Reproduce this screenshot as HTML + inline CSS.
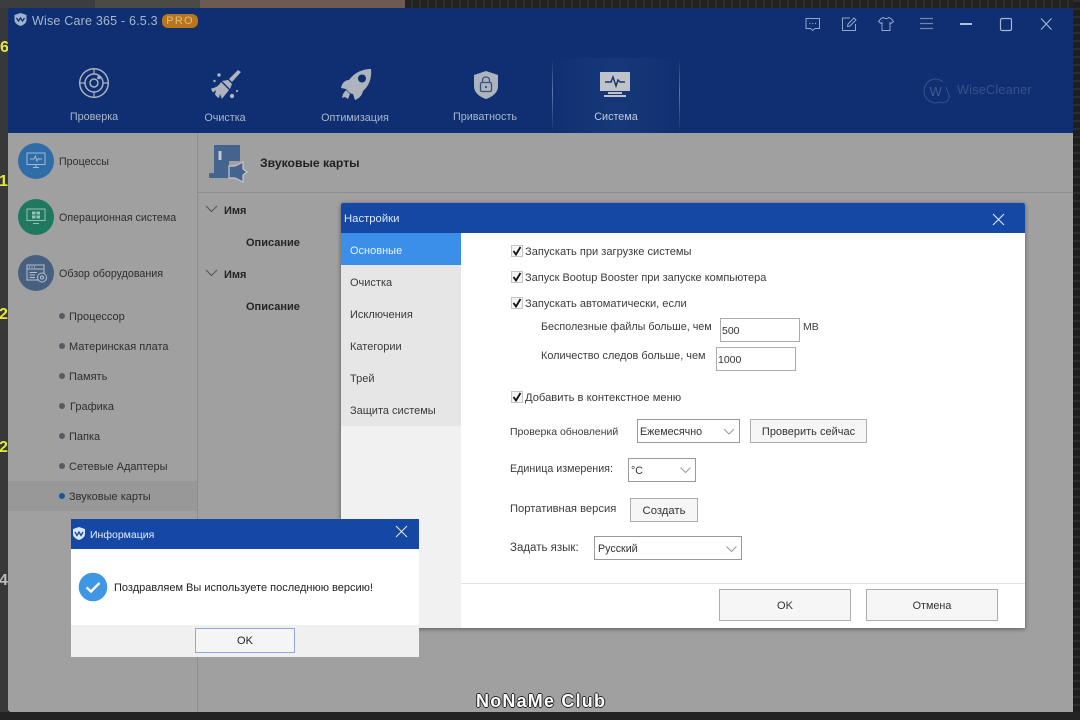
<!DOCTYPE html>
<html lang="ru"><head><meta charset="utf-8"><title>Wise Care 365</title>
<style>
*{box-sizing:border-box}
html,body{margin:0;padding:0;width:1080px;height:720px;overflow:hidden;background:#232323}
body{position:relative;font-family:"Liberation Sans",sans-serif;font-size:11px;color:#2b2b2b}
.a{position:absolute}
.t{position:absolute;white-space:nowrap;line-height:20px}
.b{font-weight:bold}
.nav{color:#aab7cc;font-size:10.8px;transform:translateX(-50%)}
.side{color:#2e2e2e;font-size:10.7px;line-height:22px}
.sub{color:#2e2e2e;font-size:11px;line-height:22px}
.dot{position:absolute;left:59px;width:6px;height:6px;border-radius:50%;background:#565a5e}
.circ{position:absolute;left:18px;width:36px;height:36px;border-radius:50%}
.cb{position:absolute;left:511px;width:12px;height:12px;background:#f4f4f4;border:1px solid #c4c4c4}
.in{position:absolute;border:1px solid #ababab;background:#fff;line-height:25px;padding-left:1px;color:#333;font-size:10.5px}
.btn{position:absolute;border:1px solid #adadad;background:#f6f6f6;text-align:center;color:#333;font-size:11px}
.sel{position:absolute;border:1px solid #9a9a9a;background:#fff;height:24px;line-height:24px;padding-left:2px;color:#333;font-size:10.7px}
.nv{position:absolute;left:350px;color:#3a3a3a;font-size:11px;line-height:22px}
.o{position:absolute;color:#3c3c3c;font-size:11px;line-height:22px;white-space:nowrap}
</style></head><body>

<!-- backdrop -->
<div class="a" style="left:0;top:0;width:8px;height:720px;background:#36383a"></div>
<div class="a" style="left:0;top:0;width:95px;height:8px;background:#3b3d3e"></div>
<div class="a" style="left:95px;top:0;width:105px;height:8px;background:#4a4a46"></div>
<div class="a" style="left:200px;top:0;width:205px;height:8px;background:#6d5a52"></div>
<div class="a" style="left:405px;top:0;width:675px;height:8px;background:repeating-linear-gradient(90deg,#222 0 6px,#303030 6px 8px)"></div>
<div class="a" style="left:1073px;top:0;width:7px;height:720px;background:repeating-linear-gradient(0deg,#1e1e1e 0 6px,#2c2c2c 6px 8px)"></div>
<div class="a" style="left:0;top:712px;width:1080px;height:8px;background:#232323"></div>
<div class="t b" style="left:0;top:38px;color:#e8e83a;font-size:16px">6</div>
<div class="t b" style="left:-1px;top:172px;color:#e8e83a;font-size:16px">1</div>
<div class="t b" style="left:-1px;top:305px;color:#e8e83a;font-size:16px">2</div>
<div class="t b" style="left:-1px;top:438px;color:#e8e83a;font-size:16px">2</div>
<div class="t b" style="left:-1px;top:571px;color:#bdbdbd;font-size:16px">4</div>

<!-- main window -->
<div class="a" style="left:8px;top:8px;width:1065px;height:704px;background:#a0a0a0;border-radius:0 0 0 3px"></div>
<div class="a" style="left:8px;top:8px;width:1065px;height:125px;background:#0f2f72"></div>
<div class="a" style="left:197px;top:133px;width:1px;height:579px;background:#8c8c8c"></div>
<div class="a" style="left:198px;top:192px;width:875px;height:1px;background:#8e8e8e"></div>

<!-- title -->
<svg class="a" style="left:13px;top:12px" width="15" height="15" viewBox="0 0 15 15"><path d="M7.5 1 L13.500 3 V8 C13.500 11 10.500 13 7.500 14 C4.500 13 1.500 11 1.500 8 V3 Z" fill="#9fb1cc"/><path d="M3.500 6 L5.500 9 L7.500 6 L9.500 9 L11.500 6" fill="none" stroke="#0f2f72" stroke-width="1.300"/></svg>
<div class="t" style="left:32px;top:11px;color:#a9b6cb;font-size:12.500px;letter-spacing:.2px">Wise Care 365 - 6.5.3</div>
<div class="a" style="left:162px;top:14px;width:36px;height:14px;background:#b8751e;border-radius:6px;color:#e2bd7f;font-size:11px;line-height:14px;text-align:center;letter-spacing:1.200px">PRO</div>

<!-- top-right icons -->
<svg class="a" style="left:800px;top:14px" width="260" height="22" viewBox="0 0 260 22" fill="none" stroke="#92a7c8" stroke-width="1">
<path d="M6 4.500H19.500V14.500H15L12.700 16.500L10.500 14.500H6Z"/><path d="M9.500 9.500h1M12.300 9.500h1M15 9.500h1" stroke-width="1.200"/>
<path d="M55.500 10V16.500H42.500V4H50"/><path d="M47.500 12.500L48 10L54 4L56 6L50 12Z"/>
<path d="M81 4.500L83.500 3.500C84.500 5 87.500 5 88.500 3.500L91 4.500L93.500 7.500L91 9.500L90 8.700V16.500H82V8.700L81 9.500L78.500 7.500Z"/>
<path d="M120 4.500H133M120 9.500H133M120 14.500H133" stroke="#6f87ad" stroke-width="1.300"/>
<path d="M160 10H172" stroke="#b3c1d8" stroke-width="2"/>
<rect x="200.500" y="4.500" width="11" height="12" rx="1.500" stroke="#a6b6d0" stroke-width="1.200"/>
<path d="M241 4.500L251.500 15.500M251.500 4.500L241 15.500" stroke="#a6b6d0" stroke-width="1.100"/>
</svg>

<!-- selected tab -->
<div class="a" style="left:552px;top:58px;width:128px;height:75px;background:linear-gradient(90deg,#0f2f72 0,#163878 50%,#0f2f72 100%)"></div>
<div class="a" style="left:552px;top:58px;width:1px;height:75px;background:linear-gradient(180deg,#0f2f72,#5a78ad 45%,#0f2f72)"></div>
<div class="a" style="left:679px;top:58px;width:1px;height:75px;background:linear-gradient(180deg,#0f2f72,#5a78ad 45%,#0f2f72)"></div>

<!-- nav icons -->
<svg class="a" style="left:78px;top:67px" width="32" height="32" viewBox="0 0 32 32" fill="none" stroke="#aab2bf" stroke-width="1.500"><circle cx="16" cy="16" r="14.300"/><circle cx="16" cy="16" r="9"/><circle cx="16" cy="16" r="4"/><path d="M16 1.500V7M16 25V30.500M1.500 16H7M25 16H30.500" stroke-width="1.200"/><circle cx="21" cy="10.500" r="1.800" fill="#aab2bf" stroke="none"/></svg>
<svg class="a" style="left:210px;top:69px" width="32" height="32" viewBox="0 0 32 32" fill="#aeb4bd"><path d="M28 1L31 3L22 13L19 10Z"/><path d="M18 11L22 15L20 20L12 12Z"/><path d="M11 13L19 21C16 25 13 28 12 30L10 25L9 29C7 28 6 27 5 25.500L6 21L3 23.500C2 22 1.500 21 1 19.500C5 19 9 17 11 13Z"/><circle cx="9" cy="6" r="1.700"/><circle cx="4.500" cy="12" r="1.200"/><circle cx="22" cy="27" r="2.200"/><circle cx="27" cy="22" r="1.100"/></svg>
<svg class="a" style="left:340px;top:69px" width="32" height="32" viewBox="0 0 32 32"><path d="M31 0C32 9 29 17 23 22C22 26 20 29 15 31L13 25C10 25 8 22 6 20L1 19C2 14 5 11 9 11C15 3 23 0 31 0Z" fill="#aeb4bd"/><circle cx="22" cy="9.500" r="4" fill="#0f2f72"/><path d="M6 21L10 25L8 30L5 28L2 29L3 25Z" fill="#aeb4bd"/></svg>
<svg class="a" style="left:473px;top:70px" width="26" height="30" viewBox="0 0 26 30"><path d="M13 1L25 5V16C25 23 19 27 13 29C7 27 1 23 1 16V5Z" fill="#aeb4bd"/><rect x="7.500" y="12.500" width="11" height="9" rx="1.500" fill="none" stroke="#33507f" stroke-width="1.300"/><path d="M9.500 12.500V10C9.500 6 16.500 6 16.500 10V12.500" fill="none" stroke="#33507f" stroke-width="1.300"/><circle cx="13" cy="17" r="1.100" fill="#33507f"/></svg>
<svg class="a" style="left:600px;top:71px" width="31" height="28" viewBox="0 0 31 28"><rect x="0" y="1" width="30" height="19" fill="#c0c4ca"/><path d="M5 11H11L13 6L16 15L18 9L20 11H25" fill="none" stroke="#1a3770" stroke-width="1.500"/><rect x="8" y="21" width="14" height="2" fill="#c0c4ca"/><rect x="4" y="24" width="22" height="2" fill="#c0c4ca"/></svg>

<div class="t nav" style="left:94px;top:107px">Проверка</div>
<div class="t nav" style="left:225px;top:108px">Очистка</div>
<div class="t nav" style="left:355px;top:108px">Оптимизация</div>
<div class="t nav" style="left:485px;top:107px">Приватность</div>
<div class="t nav" style="left:616px;top:107px;color:#c0cadb">Система</div>

<!-- wisecleaner -->
<svg class="a" style="left:923px;top:78px" width="28" height="27" viewBox="0 0 28 27" fill="none" stroke="#34528c" stroke-width="1"><path d="M20 4C11 -3 1 4 1 13C1 21 9 27 17 24C21 26 27 23 26 17C25 15 24 12 23 9"/><text x="6.500" y="18" font-family="Liberation Sans" font-size="13" fill="#3d5b94" stroke="none">W</text></svg>
<div class="t" style="left:957px;top:80px;color:#34528c;font-size:12.700px;letter-spacing:.2px">WiseCleaner</div>

<!-- sidebar -->
<div class="a" style="left:8px;top:481px;width:189px;height:30px;background:#989898"></div>

<div class="circ" style="top:143px;background:#2f6da8"></div>
<svg class="a" style="left:26px;top:152px" width="20" height="18" viewBox="0 0 20 18" fill="none" stroke="#9dbad6" stroke-width="1"><rect x="1" y="1" width="18" height="11.500"/><path d="M4 7H8L9.500 4L11 9L12.500 6.500L13 7H16"/><path d="M7 15.500H13M10 12.500V15.500"/></svg>
<div class="circ" style="top:199px;background:#1f7860"></div>
<svg class="a" style="left:26px;top:208px" width="20" height="18" viewBox="0 0 20 18"><rect x="1" y="1" width="18" height="11.500" fill="none" stroke="#9cc2b5"/><path d="M6 3.500H9.500V6.500H6ZM10.500 3.500H14V6.500H10.500ZM6 7.500H9.500V10.500H6ZM10.500 7.500H14V10.500H10.500Z" fill="#9cc2b5"/><path d="M7 15.500H13" stroke="#9cc2b5"/></svg>
<div class="circ" style="top:255px;background:#47607f"></div>
<svg class="a" style="left:26px;top:264px" width="22" height="20" viewBox="0 0 22 20" fill="none" stroke="#b3bfcd" stroke-width="1"><rect x="1" y="1" width="17" height="15"/><path d="M1 5H18M3.500 8.500H11M3.500 11H9M3.500 13.500H9"/><path d="M3 3h1M5.500 3h1M8 3h1" stroke-width="1.200"/><circle cx="16" cy="13.500" r="4.500" fill="#47607f"/><circle cx="16" cy="13.500" r="1.500"/></svg>

<div class="t side" style="left:59px;top:151px">Процессы</div>
<div class="t side" style="left:59px;top:207px">Операционная система</div>
<div class="t side" style="left:59px;top:263px">Обзор оборудования</div>

<div class="dot" style="top:313px"></div><div class="t sub" style="left:69px;top:306px">Процессор</div>
<div class="dot" style="top:343px"></div><div class="t sub" style="left:69px;top:336px">Материнская плата</div>
<div class="dot" style="top:373px"></div><div class="t sub" style="left:69px;top:366px">Память</div>
<div class="dot" style="top:403px"></div><div class="t sub" style="left:70px;top:396px">Графика</div>
<div class="dot" style="top:433px"></div><div class="t sub" style="left:69px;top:426px">Папка</div>
<div class="dot" style="top:463px"></div><div class="t sub" style="left:69px;top:456px">Сетевые Адаптеры</div>
<div class="dot" style="top:493px;background:#155a97"></div><div class="t sub" style="left:69px;top:486px">Звуковые карты</div>

<!-- content head -->
<svg class="a" style="left:209px;top:144px" width="40" height="40" viewBox="0 0 40 40"><path d="M6 1H31V17H20V29H5V2Q5 1 6 1Z" fill="#44648f"/><rect x="9.500" y="7" width="3" height="9" fill="#c4c8cc"/><rect x="0" y="29" width="20" height="5" rx="1" fill="#44648f"/><path d="M20 22H26L34 18V25L38 28L34 31V38L26 34H20Z" fill="#44648f" stroke="#c4c8cc" stroke-width="1.200"/></svg>
<div class="t b" style="left:260px;top:153px;color:#222;font-size:12.200px">Звуковые карты</div>

<svg class="a" style="left:205px;top:205px" width="13" height="8" viewBox="0 0 13 8" fill="none" stroke="#555"><path d="M1 1L6.500 6.500L12 1"/></svg>
<svg class="a" style="left:205px;top:269px" width="13" height="8" viewBox="0 0 13 8" fill="none" stroke="#555"><path d="M1 1L6.500 6.500L12 1"/></svg>
<div class="t b" style="left:224px;top:201px;color:#252525;font-size:11px">Имя</div>
<div class="t b" style="left:246px;top:233px;color:#252525;font-size:11px">Описание</div>
<div class="t b" style="left:224px;top:265px;color:#252525;font-size:11px">Имя</div>
<div class="t b" style="left:246px;top:297px;color:#252525;font-size:11px">Описание</div>

<!-- settings dialog -->
<div class="a" style="left:341px;top:203px;width:684px;height:425px;background:#fff;border-radius:2px 2px 0 0;box-shadow:0 1px 5px rgba(0,0,0,.45)"></div>
<div class="a" style="left:341px;top:203px;width:684px;height:30px;background:#1548a5;border-radius:2px 2px 0 0"></div>
<div class="t" style="left:344px;top:209px;color:#dfe8f6;font-size:11.300px">Настройки</div>
<svg class="a" style="left:992px;top:213px" width="13" height="13" viewBox="0 0 13 13" stroke="#dfeaf8" stroke-width="1.100"><path d="M1 1L12 12M12 1L1 12"/></svg>
<div class="a" style="left:341px;top:233px;width:120px;height:395px;background:#f1f1f1"></div>
<div class="a" style="left:341px;top:233px;width:120px;height:193px;background:#e6e6e6"></div>
<div class="a" style="left:341px;top:233px;width:120px;height:32px;background:#3b8fe8"></div>
<div class="nv" style="top:240px;color:#eaf3fd">Основные</div>
<div class="nv" style="top:272px">Очистка</div>
<div class="nv" style="top:304px">Исключения</div>
<div class="nv" style="top:336px">Категории</div>
<div class="nv" style="top:368px">Трей</div>
<div class="nv" style="top:400px">Защита системы</div>

<div class="cb" style="top:245px"></div><div class="cb" style="top:271px"></div><div class="cb" style="top:297px"></div><div class="cb" style="top:391px"></div>
<svg class="a" style="left:511px;top:245px" width="12" height="160" viewBox="0 0 12 160" fill="none" stroke="#111" stroke-width="1.800"><path d="M2.500 6L5 9.500L9.500 2"/><path d="M2.500 32L5 35.500L9.500 28"/><path d="M2.500 58L5 61.500L9.500 54"/><path d="M2.500 152L5 155.500L9.500 148"/></svg>
<div class="o" style="left:525px;top:241px;font-size:11.100px">Запускать при загрузке системы</div>
<div class="o" style="left:525px;top:267px">Запуск Bootup Booster при запуске компьютера</div>
<div class="o" style="left:525px;top:293px;font-size:11.100px">Запускать автоматически, если</div>
<div class="o" style="left:541px;top:316px;font-size:10.750px">Бесполезные файлы больше, чем</div>
<div class="in" style="left:720px;top:318px;width:80px;height:24px">500</div>
<div class="o" style="left:803px;top:316px;font-size:10.500px">МВ</div>
<div class="o" style="left:541px;top:345px;font-size:10.900px">Количество следов больше, чем</div>
<div class="in" style="left:716px;top:347px;width:80px;height:24px">1000</div>
<div class="o" style="left:525px;top:387px;font-size:11.200px">Добавить в контекстное меню</div>

<div class="o" style="left:510px;top:421px;font-size:10.500px">Проверка обновлений</div>
<div class="sel" style="left:637px;top:419px;width:103px">Ежемесячно</div>
<div class="btn" style="left:750px;top:419px;width:117px;height:24px;line-height:24px">Проверить сейчас</div>
<div class="o" style="left:510px;top:458px;font-size:10.700px">Единица измерения:</div>
<div class="sel" style="left:628px;top:458px;width:68px">°C</div>
<div class="o" style="left:510px;top:498px;font-size:11.200px">Портативная версия</div>
<div class="btn" style="left:630px;top:498px;width:68px;height:24px;line-height:24px;font-size:11.300px">Создать</div>
<div class="o" style="left:510px;top:537px;font-size:11.500px">Задать язык:</div>
<div class="sel" style="left:594px;top:536px;width:148px;padding-left:3px">Русский</div>
<svg class="a" style="left:500px;top:420px" width="250" height="140" viewBox="0 0 250 140" fill="none" stroke="#9a9a9a" stroke-width="1"><path d="M224 9L229 14L234 9"/><path d="M180.500 47.500L185.500 52.500L190.500 47.500"/><path d="M226.500 126.500L231.500 131.500L236.500 126.500"/></svg>

<div class="a" style="left:461px;top:583px;width:564px;height:1px;background:#e2e2e2"></div>
<div class="btn" style="left:719px;top:589px;width:132px;height:32px;line-height:32px">OK</div>
<div class="btn" style="left:866px;top:589px;width:132px;height:32px;line-height:32px;font-size:10.800px">Отмена</div>

<!-- info dialog -->
<div class="a" style="left:71px;top:519px;width:348px;height:138px;background:#fff"></div>
<div class="a" style="left:71px;top:519px;width:348px;height:30px;background:#1548a5"></div>
<svg class="a" style="left:72px;top:526px" width="14" height="15" viewBox="0 0 14 15"><path d="M7 1L13 3V8C13 11 10 13 7 14C4 13 1 11 1 8V3Z" fill="#d9e6f7"/><path d="M3 6L5 9.500L7 6L9 9.500L11 6" fill="none" stroke="#1548a5" stroke-width="1.300"/></svg>
<div class="t" style="left:90px;top:525px;color:#e4ecf8;font-size:10.500px">Информация</div>
<svg class="a" style="left:395px;top:525px" width="13" height="13" viewBox="0 0 13 13" stroke="#e4ecf8" stroke-width="1"><path d="M1 1L12 12M12 1L1 12"/></svg>
<svg class="a" style="left:78px;top:572px" width="30" height="30" viewBox="0 0 30 30"><circle cx="15" cy="15" r="14.300" fill="#3f97e3"/><path d="M8.500 15.500L13 19.500L21.500 11" fill="none" stroke="#fff" stroke-width="2.400"/></svg>
<div class="t" style="left:114px;top:578px;color:#222;font-size:11px">Поздравляем Вы используете последнюю версию!</div>
<div class="a" style="left:71px;top:625px;width:348px;height:32px;background:#f0f0f0"></div>
<div class="btn" style="left:195px;top:628px;width:100px;height:25px;line-height:25px;border-color:#8fa8d8;color:#222;background:#f5f5f5">OK</div>

<!-- watermark -->
<div class="t b" style="left:476px;top:691px;color:#fff;font-size:18px;line-height:20px;letter-spacing:1.200px;text-shadow:-1px 0 #222,1px 0 #222,0 -1px #222,0 1px #222">NoNaMe Club</div>
</body></html>
